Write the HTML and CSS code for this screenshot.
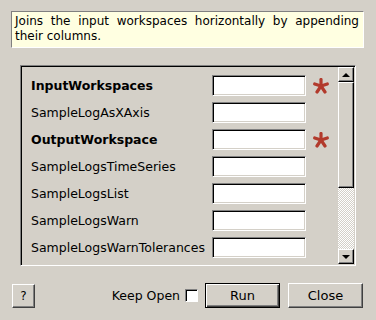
FILE: index.html
```html
<!DOCTYPE html>
<html lang="en">
<head>
  <meta charset="UTF-8" />
  <title>ConjoinXRuns</title>
  <link rel="stylesheet" href="styles.css">
</head>
<body>
  <div class="dialog">
    <div class="summary">Joins the input workspaces horizontally by appending their columns.</div>

    <div class="props">
      <div class="props-view">
        <div class="row">
          <span class="name bold">InputWorkspaces</span>
          <span class="field"></span>
          <svg class="star" viewBox="0 0 16 16"><g stroke="#b23a2c" stroke-width="3.2" stroke-linecap="round"><line x1="8" y1="8" x2="8" y2="1.5"/><line x1="8" y1="8" x2="14.3" y2="6"/><line x1="8" y1="8" x2="1.7" y2="6"/><line x1="8" y1="8" x2="12" y2="14"/><line x1="8" y1="8" x2="4" y2="14"/></g></svg>
        </div>
        <div class="row">
          <span class="name">SampleLogAsXAxis</span>
          <span class="field"></span>
        </div>
        <div class="row">
          <span class="name bold">OutputWorkspace</span>
          <span class="field"></span>
          <svg class="star" viewBox="0 0 16 16"><g stroke="#b23a2c" stroke-width="3.2" stroke-linecap="round"><line x1="8" y1="8" x2="8" y2="1.5"/><line x1="8" y1="8" x2="14.3" y2="6"/><line x1="8" y1="8" x2="1.7" y2="6"/><line x1="8" y1="8" x2="12" y2="14"/><line x1="8" y1="8" x2="4" y2="14"/></g></svg>
        </div>
        <div class="row">
          <span class="name">SampleLogsTimeSeries</span>
          <span class="field"></span>
        </div>
        <div class="row">
          <span class="name">SampleLogsList</span>
          <span class="field"></span>
        </div>
        <div class="row">
          <span class="name">SampleLogsWarn</span>
          <span class="field"></span>
        </div>
        <div class="row">
          <span class="name">SampleLogsWarnTolerances</span>
          <span class="field"></span>
        </div>
        <div class="row">
          <span class="name"></span>
          <span class="field"></span>
        </div>
      </div>
      <div class="scrollbar">
        <div class="sb-btn"><span class="arrow-up"></span></div>
        <div class="sb-thumb"></div>
        <div class="sb-track"></div>
        <div class="sb-btn"><span class="arrow-down"></span></div>
      </div>
    </div>

    <div class="actions">
      <button class="btn help">?</button>
      <div class="spacer"></div>
      <label class="keep">Keep Open <span class="check"></span></label>
      <button class="btn run">Run</button>
      <button class="btn close">Close</button>
    </div>
  </div>
</body>
</html>
```

FILE: styles.css
```css
body {
  margin: 0;
  background: #d4d0c8;
  font-family: "DejaVu Sans", sans-serif;
  color: #000;
}
.dialog {
  width: 376px;
  height: 320px;
  padding-top: 11px;
  box-sizing: border-box;
}
.summary {
  margin-left: 11px;
  width: 353px;
  height: 37px;
  box-sizing: border-box;
  background: #ffffe1;
  border-top: 1px solid #808080;
  border-left: 1px solid #808080;
  border-right: 1px solid #fff;
  border-bottom: 1px solid #fff;
  padding: 2px 4px 0 3px;
  font-size: 12px;
  line-height: 15px;
  text-align: justify;
}
.props {
  margin: 17px 0 0 20px;
  width: 336px;
  height: 201px;
  box-sizing: border-box;
  border-top: 1px solid #808080;
  border-left: 1px solid #808080;
  border-right: 1px solid #fff;
  border-bottom: 1px solid #fff;
  box-shadow: inset 1px 1px 0 #000, inset -1px -1px 0 #d4d0c8;
  display: flex;
  padding: 1px;
}
.props-view {
  flex: 1;
  overflow: hidden;
  padding: 8px 0 0 9px;
  display: flex;
  flex-direction: column;
  gap: 6px;
}
.row {
  display: flex;
  align-items: center;
  height: 21px;
  flex-shrink: 0;
}
.name {
  width: 181px;
  font-size: 12.5px;
}
.bold {
  font-weight: bold;
}
.field {
  width: 94px;
  height: 21px;
  box-sizing: border-box;
  background: #fff;
  border-top: 1px solid #808080;
  border-left: 1px solid #808080;
  border-right: 1px solid #fff;
  border-bottom: 1px solid #fff;
  box-shadow: inset 1px 1px 0 #000, inset -1px -1px 0 #d4d0c8;
}
.star {
  width: 16px;
  height: 16px;
  margin-left: 7px;
}
.scrollbar {
  width: 16px;
  display: flex;
  flex-direction: column;
}
.sb-btn, .sb-thumb {
  box-sizing: border-box;
  background: #d4d0c8;
  border-top: 1px solid #fff;
  border-left: 1px solid #fff;
  border-right: 1px solid #000;
  border-bottom: 1px solid #000;
  box-shadow: inset -1px -1px 0 #808080;
}
.sb-btn {
  height: 15px;
  display: flex;
  align-items: center;
  justify-content: center;
}
.sb-thumb {
  height: 106px;
}
.sb-track {
  flex: 1;
  background: repeating-conic-gradient(#d4d0c8 0 25%, #fff 0 50%) 0 0 / 2px 2px;
}
.arrow-up {
  border-left: 4px solid transparent;
  border-right: 4px solid transparent;
  border-bottom: 4px solid #000;
}
.arrow-down {
  border-left: 4px solid transparent;
  border-right: 4px solid transparent;
  border-top: 4px solid #000;
}
.actions {
  display: flex;
  align-items: center;
  margin-top: 17px;
  padding: 0 13px 0 12px;
  height: 25px;
}
.spacer {
  flex: 1;
}
.btn {
  font-family: "DejaVu Sans", sans-serif;
  font-size: 13px;
  background: #d4d0c8;
  color: #000;
  box-sizing: border-box;
  height: 25px;
  border-top: 1px solid #fff;
  border-left: 1px solid #fff;
  border-right: 1px solid #404040;
  border-bottom: 1px solid #404040;
  box-shadow: inset -1px -1px 0 #808080;
  padding: 0;
}
.help {
  width: 23px;
  height: 24px;
  font-size: 12px;
}
.keep {
  display: flex;
  align-items: center;
  font-size: 12.5px;
  margin-right: 7px;
}
.check {
  width: 13px;
  height: 13px;
  box-sizing: border-box;
  background: #fff;
  border-top: 1px solid #808080;
  border-left: 1px solid #808080;
  border-right: 1px solid #fff;
  border-bottom: 1px solid #fff;
  box-shadow: inset 1px 1px 0 #000;
  margin-left: 5px;
}
.run {
  width: 75px;
  border: 1px solid #000;
  box-shadow: inset 1px 1px 0 #fff, inset -1px -1px 0 #404040, inset -2px -2px 0 #808080;
  margin-right: 8px;
}
.close {
  width: 75px;
}
```
